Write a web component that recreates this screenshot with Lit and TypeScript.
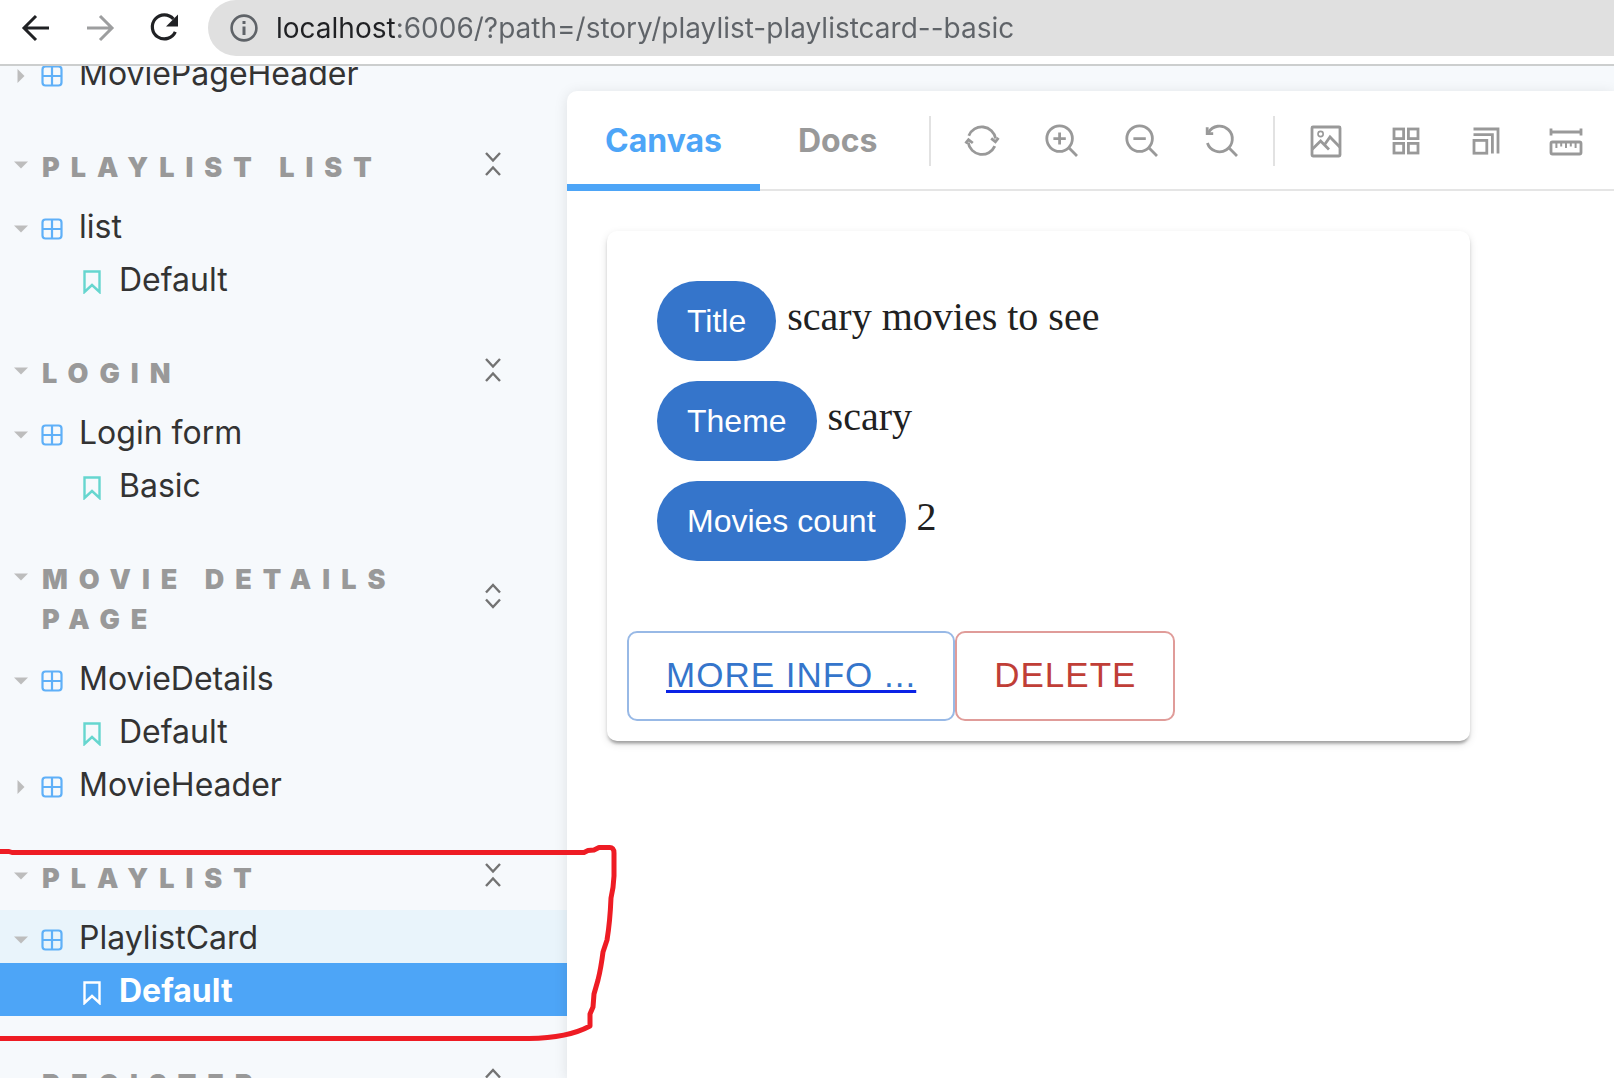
import { LitElement, html, svg, css, nothing } from "lit";
import { customElement, property } from "lit/decorators.js";
import { classMap } from "lit/directives/class-map.js";

interface Story {
  name: string;
  selected?: boolean;
}

interface Component {
  name: string;
  open: boolean;
  current?: boolean;
  stories: Story[];
}

interface Group {
  title?: string;
  expanded?: boolean;
  components: Component[];
}

const GROUPS: Group[] = [
  { components: [{ name: "MoviePageHeader", open: false, stories: [] }] },
  {
    title: "Playlist list",
    expanded: true,
    components: [{ name: "list", open: true, stories: [{ name: "Default" }] }],
  },
  {
    title: "Login",
    expanded: true,
    components: [{ name: "Login form", open: true, stories: [{ name: "Basic" }] }],
  },
  {
    title: "Movie details page",
    expanded: false,
    components: [
      { name: "MovieDetails", open: true, stories: [{ name: "Default" }] },
      { name: "MovieHeader", open: false, stories: [] },
    ],
  },
  {
    title: "Playlist",
    expanded: true,
    components: [
      { name: "PlaylistCard", open: true, current: true, stories: [{ name: "Default", selected: true }] },
    ],
  },
  { title: "Register", expanded: false, components: [] },
];

const caret = (open: boolean) => html`
  <svg class="caret" viewBox="0 0 14 14" aria-hidden="true">
    <path d=${open ? "M0 3.5H14L7 10.5Z" : "M3.5 0V14L10.5 7Z"} fill="#bdbdbd" />
  </svg>
`;

const componentIcon = html`
  <svg class="kind" viewBox="0 0 22 22" aria-hidden="true" fill="none" stroke="#5fb0f8" stroke-width="2.2">
    <rect x="1.5" y="1.5" width="19" height="19" rx="3" />
    <path d="M11 1.5V20.5M1.5 11H20.5" />
  </svg>
`;

const bookmarkIcon = html`
  <svg class="mark" viewBox="0 0 18 24" aria-hidden="true" fill="none" stroke="currentColor" stroke-width="2.4">
    <path d="M1.5 1.5H16.5V22L9 15L1.5 22Z" />
  </svg>
`;

/* Toolbar glyphs on a 36 x 36 grid, drawn with strokes only. */
const TOOL_ICONS = {
  remount: svg`
    <path d="M4.8 12.7A14 14 0 0 1 31.6 15.6" />
    <path d="M4.2 19.5A14 14 0 0 0 30.8 23.2" />
    <path d="M27.2 15.3L31.4 18.8L34.5 14.8" />
    <path d="M1.5 20.3L4.5 16.6L8.8 20" />`,
  zoomIn: svg`<circle cx="15.6" cy="15.6" r="12.8" /><path d="M24.6 24.6L33 33M15.6 9.6V21.6M9.4 15.6H21.8" />`,
  zoomOut: svg`<circle cx="15.6" cy="15.6" r="12.8" /><path d="M24.6 24.6L33 33M9.4 15.6H21.8" />`,
  zoomReset: svg`
    <path d="M4.4 9.6A12.8 12.8 0 1 1 3.4 20" />
    <path d="M3.2 4.2V10.6H9.2M24.6 24.6L33 33" />`,
  background: svg`
    <rect x="4" y="4" width="28" height="29" rx="1" />
    <circle cx="12.6" cy="11" r="2.6" stroke-width="1.6" />
    <path d="M4 26.5L12.6 18L21 26.5M16.5 21.8L22 14L32 24.2" />`,
  grid: svg`
    <rect x="6" y="6" width="9.6" height="9.6" /><rect x="20.4" y="6" width="9.6" height="9.6" />
    <rect x="6" y="20.4" width="9.6" height="9.6" /><rect x="20.4" y="20.4" width="9.6" height="9.6" />`,
  viewport: svg`
    <rect x="6" y="17.4" width="12.8" height="12.8" />
    <path d="M5.5 11.6H24.4V30.6M5.5 6H30V30.6" />`,
  measure: svg`
    <rect x="3" y="19" width="30" height="12" rx="1.5" />
    <path d="M3 5.4V12.6M33 5.4V12.6M3 9H33" />
    <path d="M8.4 19V25M13.2 19V23.6M18 19V25M22.8 19V23.6M27.6 19V25" stroke-width="2" />`,
};

type ToolName = keyof typeof TOOL_ICONS;

const tool = (name: ToolName, label: string) => html`
  <button class="tool" type="button" aria-label=${label}>
    <svg viewBox="0 0 36 36" aria-hidden="true">${TOOL_ICONS[name]}</svg>
  </button>
`;

@customElement("browser-bar")
export class BrowserBar extends LitElement {
  static styles = css`
    :host {
      display: flex;
      align-items: flex-start;
      box-sizing: border-box;
      height: 66px;
      background: #fff;
      border-bottom: 2px solid #cccece;
    }
    .nav {
      display: flex;
      gap: 28px;
      padding: 10px 26px 0 18px;
    }
    .nav button {
      display: block;
      width: 36px;
      height: 36px;
      padding: 0;
      border: 0;
      background: none;
      color: #202124;
    }
    .nav button:disabled {
      color: #9d9e9f;
    }
    svg {
      display: block;
      width: 36px;
      height: 36px;
      flex: none;
    }
    .address {
      flex: 1;
      display: flex;
      align-items: center;
      gap: 14px;
      height: 56px;
      padding-left: 18px;
      border-radius: 28px 0 0 28px;
      background: #e0e0e0;
      color: #5f6368;
    }
    .url {
      flex: 1;
      min-width: 0;
      height: 40px;
      padding: 0;
      border: 0;
      outline: 0;
      font: 28px/40px Inter, "Liberation Sans", sans-serif;
      color: transparent;
      background: linear-gradient(to right, #202124 0 119px, #5f6368 119px);
      -webkit-background-clip: text;
      background-clip: text;
    }
  `;

  render() {
    return html`
      <nav class="nav" aria-label="History">
        <button type="button" aria-label="Back">
          <svg viewBox="0 0 36 36" fill="none" stroke="currentColor" stroke-width="3">
            <path d="M31 18H6.5M18 6L6 18L18 30" />
          </svg>
        </button>
        <button type="button" aria-label="Forward" disabled>
          <svg viewBox="0 0 36 36" fill="none" stroke="currentColor" stroke-width="3">
            <path d="M5 18H29.5M18 6L30 18L18 30" />
          </svg>
        </button>
        <button type="button" aria-label="Reload">
          <svg viewBox="0 0 36 36">
            <path d="M27.4 9A12 12 0 1 0 29.3 21.8" fill="none" stroke="currentColor" stroke-width="3.2" />
            <path d="M32 4.5V16.5H20Z" fill="currentColor" />
          </svg>
        </button>
      </nav>
      <div class="address">
        <svg viewBox="0 0 36 36" aria-hidden="true">
          <circle cx="18" cy="18" r="12.4" fill="none" stroke="currentColor" stroke-width="2.6" />
          <path d="M16.5 16.5H19.5V25H16.5ZM16.5 11H19.5V14H16.5Z" fill="currentColor" />
        </svg>
        <input
          class="url"
          type="text"
          aria-label="Address"
          spellcheck="false"
          .value=${"localhost:6006/?path=/story/playlist-playlistcard--basic"}
        />
      </div>
    `;
  }
}

@customElement("story-tree")
export class StoryTree extends LitElement {
  @property({ attribute: false }) groups: Group[] = [];

  static styles = css`
    :host {
      display: block;
      overflow: hidden;
      font: 32px/51px Inter, "Liberation Sans", sans-serif;
      color: #333;
    }
    .tree {
      margin-top: -20px;
    }
    .group {
      margin-bottom: 49px;
    }
    .heading {
      display: flex;
      margin: 0 0 11px;
      padding-right: 53px;
      font-size: 27px;
      font-weight: 900;
      line-height: 40px;
      color: #999;
    }
    button {
      margin: 0;
      border: 0;
      background: none;
      font: inherit;
      color: inherit;
      text-align: left;
    }
    .title {
      flex: 1;
      display: flex;
      align-items: flex-start;
      gap: 14px;
      padding: 0 60px 0 14px;
      letter-spacing: 11px;
      text-transform: uppercase;
    }
    .title .caret {
      margin-top: 10px;
    }
    .toggle {
      align-self: center;
      padding: 0 0 8px;
      color: #737373;
    }
    .toggle svg {
      display: block;
      width: 42px;
      height: 26px;
    }
    svg {
      flex: none;
    }
    .caret {
      width: 14px;
      height: 14px;
    }
    .row {
      display: flex;
      align-items: center;
      width: 100%;
      box-sizing: border-box;
      padding: 2px 14px 0;
      color: inherit;
      text-decoration: none;
    }
    .row svg {
      margin-top: 5px;
    }
    .current {
      background: #e9f4fb;
    }
    .kind {
      width: 22px;
      height: 22px;
      margin: 0 16px 0 13px;
    }
    .mark {
      width: 18px;
      height: 24px;
      margin: 0 18px 0 69px;
      color: #66d6cf;
    }
    .selected {
      background: #4da5f7;
      color: #fff;
      font-weight: 700;
    }
    .selected .mark {
      color: #fff;
    }
  `;

  private renderHeading(group: Group) {
    const chevrons = group.expanded ? "M14 2L21 9.5L28 2M14 24L21 16.5L28 24" : "M14 9.5L21 2L28 9.5M14 16.5L21 24L28 16.5";
    return html`
      <h2 class="heading">
        <button class="title" type="button">${caret(true)}<span>${group.title}</span></button>
        <button class="toggle" type="button" aria-label=${group.expanded ? "Collapse all" : "Expand all"}>
          <svg viewBox="0 0 42 26" fill="none" stroke="currentColor" stroke-width="2.4"><path d=${chevrons} /></svg>
        </button>
      </h2>
    `;
  }

  private renderComponent(item: Component) {
    return html`
      <button
        type="button"
        aria-expanded=${item.open}
        class=${classMap({ row: true, current: !!item.current })}
      >${caret(item.open)}${componentIcon}<span>${item.name}</span></button>
      ${item.stories.map(
        (story) => html`
          <a href="#" class=${classMap({ row: true, selected: !!story.selected })}
            >${bookmarkIcon}<span>${story.name}</span></a>
        `
      )}
    `;
  }

  render() {
    return html`
      <nav class="tree" aria-label="Stories">
        ${this.groups.map(
          (group) => html`
            <section class="group">
              ${group.title ? this.renderHeading(group) : nothing}
              ${group.components.map((item) => this.renderComponent(item))}
            </section>
          `
        )}
      </nav>
    `;
  }
}

@customElement("preview-toolbar")
export class PreviewToolbar extends LitElement {
  static styles = css`
    :host {
      display: flex;
      align-items: center;
      height: 100px;
      box-shadow: inset 0 -2px #e5e5e5;
      overflow: hidden;
    }
    .tabs {
      display: flex;
      align-self: stretch;
      margin-right: 14px;
    }
    .tab {
      margin: 0;
      padding: 7px 38px 0;
      border: 0;
      border-bottom: 7px solid transparent;
      background: none;
      font: 700 32px/40px Inter, "Liberation Sans", sans-serif;
      color: #999;
    }
    .active {
      color: #4da5f7;
      border-bottom-color: #4da5f7;
    }
    .line {
      flex: none;
      width: 2px;
      height: 50px;
      background: #e2e2e2;
    }
    .tools {
      display: flex;
      gap: 44px;
      padding: 0 33px;
    }
    .tool {
      flex: none;
      display: block;
      width: 36px;
      height: 36px;
      padding: 0;
      border: 0;
      background: none;
      color: #999;
    }
    .tool svg {
      display: block;
      width: 36px;
      height: 36px;
      fill: none;
      stroke: currentColor;
      stroke-width: 2.8;
    }
  `;

  render() {
    return html`
      <div class="tabs" role="tablist">
        <button class="tab active" type="button" role="tab" aria-selected="true">Canvas</button>
        <button class="tab" type="button" role="tab" aria-selected="false">Docs</button>
      </div>
      <span class="line"></span>
      <div class="tools">
        ${tool("remount", "Remount component")} ${tool("zoomIn", "Zoom in")} ${tool("zoomOut", "Zoom out")}
        ${tool("zoomReset", "Reset zoom")}
      </div>
      <span class="line"></span>
      <div class="tools">
        ${tool("background", "Change background")} ${tool("grid", "Apply grid")}
        ${tool("viewport", "Change viewport size")} ${tool("measure", "Enable measure")}
      </div>
    `;
  }
}

@customElement("playlist-card")
export class PlaylistCard extends LitElement {
  @property() name = "";
  @property() theme = "";
  @property({ type: Number }) count = 0;

  static styles = css`
    :host {
      display: block;
      max-width: 863px;
      border-radius: 10px;
      background: #fff;
      color: #212121;
      box-shadow: 0 5px 3px -3px rgba(0, 0, 0, 0.2), 0 3px 3px rgba(0, 0, 0, 0.14), 0 3px 8px rgba(0, 0, 0, 0.12);
    }
    .facts {
      display: grid;
      gap: 20px;
      margin: 0;
      padding: 50px 50px 70px;
    }
    .fact {
      display: flex;
      align-items: center;
      gap: 11px;
    }
    .chip {
      padding: 0 30px;
      border-radius: 40px;
      background: #3575cb;
      color: #fff;
      font: 32px/80px "Liberation Sans", Arial, sans-serif;
    }
    .value {
      margin: 0;
      padding-bottom: 8px;
      font: 40px/48px "Liberation Serif", "Times New Roman", serif;
    }
    .actions {
      display: flex;
      padding: 0 20px 20px;
    }
    .action {
      box-sizing: border-box;
      padding: 12px 37px 14px;
      border: 2px solid;
      border-radius: 10px;
      background: none;
      font: 35px/60px "Liberation Sans", Arial, sans-serif;
      letter-spacing: 1px;
      text-transform: uppercase;
    }
    .more {
      color: #3575cb;
      border-color: #98b9e6;
      text-decoration: underline 3px #0a22e6;
      text-underline-offset: 3px;
      text-decoration-skip-ink: none;
    }
    .delete {
      color: #c03e37;
      border-color: #e09c99;
    }
  `;

  private fact(label: string, value: string | number) {
    return html`<div class="fact"><dt class="chip">${label}</dt><dd class="value">${value}</dd></div>`;
  }

  render() {
    return html`
      <dl class="facts">
        ${this.fact("Title", this.name)} ${this.fact("Theme", this.theme)} ${this.fact("Movies count", this.count)}
      </dl>
      <div class="actions">
        <a class="action more" href="#">More info ...</a>
        <button class="action delete" type="button">Delete</button>
      </div>
    `;
  }
}

@customElement("app-root")
export class AppRoot extends LitElement {
  static styles = css`
    :host {
      position: relative;
      display: flex;
      flex-direction: column;
      height: 100vh;
      overflow: hidden;
      background: #f6f9fc;
    }
    .body {
      flex: 1;
      min-height: 0;
      display: grid;
      grid-template-columns: 567px minmax(0, 1fr);
      grid-template-rows: minmax(0, 1fr);
    }
    .preview {
      position: relative;
      margin-top: 25px;
      border-top-left-radius: 10px;
      background: #fff;
      box-shadow: 0 2px 14px rgba(0, 0, 0, 0.1);
    }
    .canvas {
      padding: 40px;
    }
    .scribble {
      position: absolute;
      left: 0;
      top: 840px;
      width: 630px;
      height: 210px;
      pointer-events: none;
    }
  `;

  render() {
    return html`
      <browser-bar></browser-bar>
      <div class="body">
        <story-tree .groups=${GROUPS}></story-tree>
        <main class="preview">
          <preview-toolbar></preview-toolbar>
          <div class="canvas">
            <playlist-card name="scary movies to see" theme="scary" count="2"></playlist-card>
          </div>
        </main>
      </div>
      <svg class="scribble" viewBox="0 840 630 210" aria-hidden="true">
        <path
          d="M0 851.5H9L12 852.5H584L588 850.5L594 850L599 847.5H609Q614 847 614 853V876Q613.5 888 611 898Q610 922 607 940L603 952Q601 968 598 980L594 994L593 1007L590 1014V1026Q568 1038 529 1038.5H0"
          fill="none"
          stroke="#ee1c24"
          stroke-width="5"
          stroke-linejoin="round"
        />
      </svg>
    `;
  }
}
